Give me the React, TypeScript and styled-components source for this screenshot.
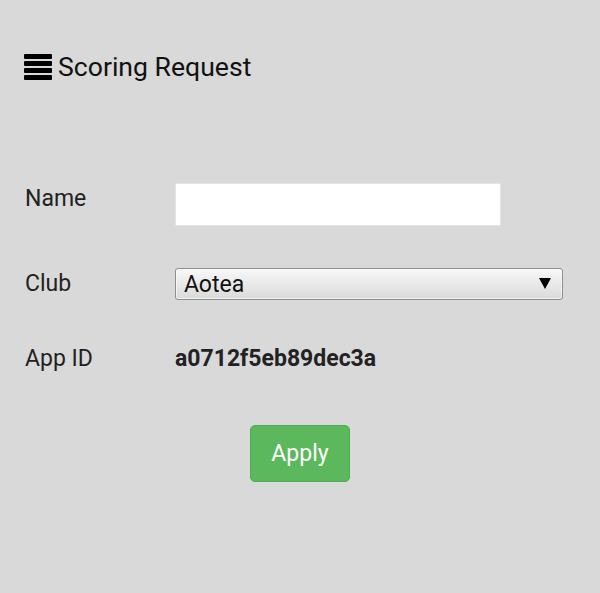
import React from 'react';
import styled, { createGlobalStyle } from 'styled-components';

const GlobalStyle = createGlobalStyle`
  html, body {
    margin: 0;
    padding: 0;
    background: #d9d9d9;
  }
  body {
    font-family: Roboto, "Liberation Sans", Arial, sans-serif;
    color: #222;
  }
`;

const Page = styled.div`
  min-height: 593px;
  padding: 51px 0 0 24px;
  box-sizing: border-box;
`;

const Title = styled.h1`
  display: flex;
  align-items: center;
  gap: 6px;
  margin: 0;
  font-size: 26.6px;
  font-weight: 400;
  line-height: 32px;
  color: #111;
`;

const Form = styled.div`
  display: grid;
  grid-template-columns: 150px auto;
  row-gap: 42px;
  align-items: start;
  margin-top: 100px;
  padding-left: 1px;
`;

const Label = styled.div<{ $offset?: number }>`
  font-size: 23px;
  line-height: 27px;
  padding-top: ${(p) => p.$offset ?? 0}px;
  color: #222;
`;

const TextInput = styled.input`
  width: 326px;
  height: 43px;
  box-sizing: border-box;
  border: 1px solid #e4e4e4;
  background: #fff;
  margin: 0;
  font: inherit;
  font-size: 22px;
  padding: 0 8px;
  outline: none;
`;

const SelectWrap = styled.div`
  position: relative;
  width: 388px;
  height: 32px;
`;

const Select = styled.select`
  appearance: none;
  -webkit-appearance: none;
  width: 100%;
  height: 100%;
  box-sizing: border-box;
  margin: 0;
  border: 1px solid #8e8e8e;
  border-radius: 3px;
  background: linear-gradient(#f8f8f8, #dadada);
  font-family: Roboto, "Liberation Sans", Arial, sans-serif;
  font-size: 23px;
  color: #111;
  padding: 0 0 0 8px;
  box-shadow: inset 0 0 0 1px rgba(255, 255, 255, 0.6);
`;

const Arrow = styled.svg`
  position: absolute;
  right: 12px;
  top: 10px;
  pointer-events: none;
`;

const Value = styled.div`
  font-size: 23px;
  line-height: 27px;
  padding-top: 3px;
  font-weight: 700;
  color: #222;
`;

const Actions = styled.div`
  padding: 53px 0 0 226px;
`;

const Button = styled.button`
  width: 100px;
  height: 57px;
  box-sizing: border-box;
  border: 1px solid #4cae4c;
  border-radius: 5px;
  background: #5cb85c;
  color: #fff;
  font-family: Roboto, "Liberation Sans", Arial, sans-serif;
  font-size: 23px;
  padding: 0;
  cursor: pointer;
`;

const MenuIcon = () => (
  <svg width="28" height="26" viewBox="0 0 28 26">
    {[0, 7, 14, 21].map((y) => (
      <rect key={y} x="0" y={y} width="28" height="5" rx="1" fill="#000" />
    ))}
  </svg>
);

export default function App() {
  return (
    <>
      <GlobalStyle />
      <Page>
        <Title>
          <MenuIcon />
          Scoring Request
        </Title>
        <Form>
          <Label $offset={2}>Name</Label>
          <TextInput type="text" />
          <Label $offset={2}>Club</Label>
          <SelectWrap>
            <Select defaultValue="Aotea">
              <option>Aotea</option>
            </Select>
            <Arrow width="12" height="11" viewBox="0 0 12 11">
              <polygon points="0,0 12,0 6,11" fill="#000" />
            </Arrow>
          </SelectWrap>
          <Label $offset={3}>App ID</Label>
          <Value>a0712f5eb89dec3a</Value>
        </Form>
        <Actions>
          <Button>Apply</Button>
        </Actions>
      </Page>
    </>
  );
}
